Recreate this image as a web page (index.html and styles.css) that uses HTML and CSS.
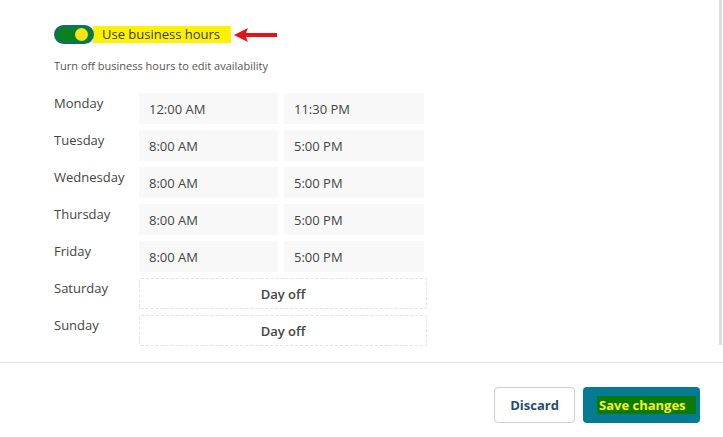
FILE: index.html
```html
<!DOCTYPE html>
<html lang="en">
<head>
  <meta charset="UTF-8" />
  <title>Business hours</title>
  <link rel="stylesheet" href="styles.css">
</head>
<body>

  <div class="panel">
    <div class="toggle-row">
      <span class="switch"><span class="knob"></span></span>
      <span class="mark">Use business hours</span>
      <svg class="arrow" width="46" height="16" viewBox="0 0 46 16">
        <path d="M1 8 L15 1 L13 6 L44 6 L44 10 L13 10 L15 15 Z" fill="#e2141b"/>
      </svg>
    </div>

    <p class="hint">Turn off business hours to edit availability</p>

    <div class="schedule">
      <div class="day">Monday</div>
      <div class="time">12:00 AM</div>
      <div class="time">11:30 PM</div>

      <div class="day">Tuesday</div>
      <div class="time">8:00 AM</div>
      <div class="time">5:00 PM</div>

      <div class="day">Wednesday</div>
      <div class="time">8:00 AM</div>
      <div class="time">5:00 PM</div>

      <div class="day">Thursday</div>
      <div class="time">8:00 AM</div>
      <div class="time">5:00 PM</div>

      <div class="day">Friday</div>
      <div class="time">8:00 AM</div>
      <div class="time">5:00 PM</div>

      <div class="day">Saturday</div>
      <div class="off">Day off</div>

      <div class="day">Sunday</div>
      <div class="off">Day off</div>
    </div>

    <!-- scrollbar of the inner pane -->
    <div class="scroll"></div>
  </div>

  <div class="footer">
    <button class="btn discard">Discard</button>
    <button class="btn save"><span class="save-mark">Save changes</span></button>
  </div>

</body>
</html>
```

FILE: styles.css
```css
body {
  margin: 0;
  font-family: "Open Sans", "Noto Sans", Arial, sans-serif;
  background: #fff;
  color: #333;
}

.panel {
  position: relative;
  height: 363px;
  padding: 25px 0 0 54px;
  box-sizing: border-box;
  border-bottom: 1px solid #e6e6e6;
}

.toggle-row {
  display: flex;
  align-items: center;
  height: 19px;
}

.switch {
  display: inline-block;
  position: relative;
  width: 36px;
  height: 15px;
  background: #0a8020;
  border: 2px solid #0b6b80;
  border-radius: 10px;
}

.knob {
  position: absolute;
  right: 4px;
  top: 1px;
  width: 13px;
  height: 13px;
  border-radius: 50%;
  background: #f4e51a;
}

.mark {
  background: #fff200;
  color: #3b3b3b;
  font-size: 13px;
  line-height: 17px;
  padding: 0 11px 0 9px;
  margin-left: -1px;
}

.arrow {
  margin-left: 2px;
}

.hint {
  margin: 14px 0 0;
  font-size: 11px;
  color: #555;
  line-height: 15px;
}

.schedule {
  display: grid;
  grid-template-columns: 79px 139px 140px;
  grid-auto-rows: 31px;
  column-gap: 6px;
  row-gap: 6px;
  margin-top: 20px;
}

.day {
  font-size: 13px;
  color: #444;
  line-height: 18px;
  padding-top: 1px;
}

.time {
  background: #f8f8f8;
  font-size: 13px;
  color: #444;
  display: flex;
  align-items: center;
  padding-left: 10px;
}

.off {
  grid-column: 2 / span 2;
  width: 288px;
  box-sizing: border-box;
  border: 1px dashed #e2e2e2;
  border-radius: 2px;
  display: flex;
  align-items: center;
  justify-content: center;
  font-size: 13px;
  font-weight: 600;
  color: #444;
}

.scroll {
  position: absolute;
  right: 1px;
  top: 0;
  width: 3px;
  height: 345px;
  background: #dcdcdc;
}

.footer {
  display: flex;
  justify-content: flex-end;
  gap: 8px;
  padding: 24px 23px 0 0;
}

.btn {
  height: 36px;
  border-radius: 4px;
  font-family: inherit;
  font-size: 13px;
  font-weight: 700;
  cursor: pointer;
}

.discard {
  width: 81px;
  background: #fff;
  border: 1px solid #cfcfcf;
  color: #1f4f6b;
}

.save {
  width: 117px;
  background: #057a93;
  border: none;
  display: flex;
  align-items: center;
  padding: 0 0 0 14px;
}

.save-mark {
  background: #0a7a0a;
  color: #f7f223;
  padding: 0 10px 0 2px;
  line-height: 18px;
  white-space: nowrap;
}
```
